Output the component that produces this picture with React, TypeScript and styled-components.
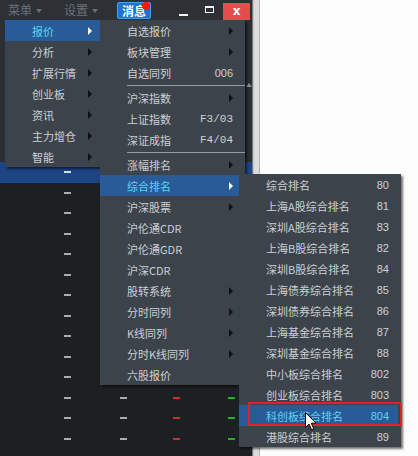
import React from 'react';
import styled, { createGlobalStyle } from 'styled-components';

const Global = createGlobalStyle`
  html, body { margin: 0; padding: 0; background: #fcfcfc; }
  body { font-family: "Noto Sans CJK SC", "Noto Sans", sans-serif; }
`;

const Screen = styled.div`
  position: relative;
  width: 418px;
  height: 456px;
  overflow: hidden;
  display: flex;
  background: #fcfcfc;
`;

const AppWindow = styled.div`
  width: 252px;
  height: 100%;
  display: flex;
  flex-direction: column;
  background: #1d2023;
`;

const Divider = styled.div`
  width: 9px;
  height: 100%;
  background: linear-gradient(
    to right,
    #7a7d80 0 1px,
    #c4c4c4 1px 2px,
    #dcdcdc 2px 7px,
    #b4b4b4 7px 8px,
    #fcfcfc 8px 9px
  );
`;

const Blank = styled.div`
  flex: 1;
  background: #fcfcfc;
`;

/* ---------- title bar ---------- */
const TitleBar = styled.div`
  height: 20px;
  flex: none;
  display: flex;
  align-items: center;
  background: #2d3136;
  padding-left: 8px;
  font-size: 12px;
  color: #6c727a;
`;

const TitleMenu = styled.div<{ $w: number }>`
  width: ${p => p.$w}px;
  display: flex;
  align-items: center;
  gap: 4px;
  line-height: 14px;
`;

const DownCaret = styled.span`
  width: 0;
  height: 0;
  border-left: 3px solid transparent;
  border-right: 3px solid transparent;
  border-top: 4px solid #6c727a;
  margin-top: 1px;
`;

const MsgButton = styled.div`
  position: relative;
  width: 34px;
  height: 17px;
  box-sizing: border-box;
  margin-top: 1px;
  background: #1976d0;
  border: 1px solid #46a0f0;
  border-radius: 2px;
  color: #ffffff;
  font-weight: 700;
  font-size: 12px;
  line-height: 15px;
  text-align: center;
  letter-spacing: 0px;
`;

const RedDot = styled.span`
  position: absolute;
  right: 0px;
  top: -1px;
  width: 8px;
  height: 8px;
  border-radius: 50%;
  background: #ff1414;
`;

const MinBtn = styled.div`
  margin-left: 28px;
  margin-top: 9px;
  width: 9px;
  height: 2px;
  background: #f2f2f2;
`;

const MaxBtn = styled.div`
  margin-left: 17px;
  width: 9px;
  height: 7px;
  box-sizing: border-box;
  border: 1px solid #f2f2f2;
  border-top-width: 2px;
  margin-top: -1px;
`;

const CloseBtn = styled.div`
  margin-left: 9px;
  width: 27px;
  height: 17px;
  margin-top: 2px;
  background: #e64b4e;
  color: #fff;
  font-family: "DejaVu Sans", sans-serif;
  font-weight: 700;
  font-size: 12px;
  line-height: 16px;
  text-align: center;
`;

/* ---------- data area ---------- */
const UpperPanel = styled.div`
  height: 142px;
  flex: none;
  display: flex;
  justify-content: flex-end;
  background: #2b2f34;
`;

const ScrollTrack = styled.div`
  width: 7px;
  background: #2a2e33;
  display: flex;
  justify-content: center;
  padding-top: 63px;
`;

const UpArrow = styled.span`
  width: 0;
  height: 0;
  border-left: 3px solid transparent;
  border-right: 3px solid transparent;
  border-bottom: 4px solid #8a9096;
`;

const DataRow = styled.div<{ $sel?: boolean }>`
  height: 20.5px;
  flex: none;
  display: grid;
  grid-template-columns: 72px 56px 53px 55px 1fr;
  align-items: center;
  background: ${p => (p.$sel ? '#1d4585' : '#1d2023')};
`;

const Cell = styled.div`
  display: flex;
  justify-content: flex-end;
  padding-right: 1px;
`;

const Dash = styled.span<{ $c: string }>`
  width: 7px;
  height: 2px;
  background: ${p => p.$c};
`;

/* ---------- menus ---------- */
const MenuBase = styled.div`
  position: absolute;
  background: #3c434b;
  box-shadow: 2px 2px 2px rgba(0, 0, 0, 0.55);
  display: flex;
  flex-direction: column;
  font-size: 11px;
  color: #ccd0d4;
`;

const MainMenu = styled(MenuBase)`
  left: 5px;
  top: 20px;
  width: 100px;
`;

const SubMenu = styled(MenuBase)`
  left: 100px;
  top: 20px;
  width: 145px;
`;

const RankMenu = styled(MenuBase)`
  left: 239px;
  top: 174px;
  width: 162px;
`;

const Item = styled.div<{ $active?: boolean; $mr: number; $pr: number }>`
  position: relative;
  height: 21px;
  flex: none;
  margin-right: ${p => p.$mr}px;
  padding: 0 ${p => p.$pr}px 0 27px;
  display: flex;
  align-items: center;
  justify-content: space-between;
  background: ${p => (p.$active ? '#285b98' : 'transparent')};
  color: ${p => (p.$active ? '#5dd4f5' : '#ccd0d4')};
  white-space: nowrap;
`;

const Arrow = styled.span<{ $active?: boolean }>`
  width: 0;
  height: 0;
  border-top: 4px solid transparent;
  border-bottom: 4px solid transparent;
  border-left: 4px solid ${p => (p.$active ? '#ffffff' : '#0e1012')};
`;

const Key = styled.span<{ $serif?: boolean }>`
  font-family: ${p =>
    p.$serif ? '"Liberation Mono", monospace' : '"Liberation Sans", sans-serif'};
  font-size: 11px;
`;

const Separator = styled.div`
  height: 4px;
  flex: none;
  display: flex;
  align-items: center;
  padding-left: 27px;
  &::after {
    content: '';
    flex: 1;
    height: 1px;
    background: #959ba1;
  }
`;

const Highlight = styled.span`
  position: absolute;
  left: 9px;
  right: -4px;
  top: -3px;
  bottom: 0;
  border: 2px solid #e2202c;
  pointer-events: none;
`;

const Cursor = styled.svg`
  position: absolute;
  left: 305px;
  top: 412px;
  width: 12px;
  height: 19px;
`;

const mainItems = ['报价', '分析', '扩展行情', '创业板', '资讯', '主力增仓', '智能'];

type Sub = { t: string; k?: string; arrow?: boolean; serif?: boolean; active?: boolean } | 'sep';
const subItems: Sub[] = [
  { t: '自选报价', arrow: true },
  { t: '板块管理', arrow: true },
  { t: '自选同列', k: '006' },
  'sep',
  { t: '沪深指数', arrow: true },
  { t: '上证指数', k: 'F3/03', serif: true },
  { t: '深证成指', k: 'F4/04', serif: true },
  'sep',
  { t: '涨幅排名', arrow: true },
  { t: '综合排名', arrow: true, active: true },
  { t: '沪深股票', arrow: true },
  { t: '沪伦通CDR' },
  { t: '沪伦通GDR' },
  { t: '沪深CDR' },
  { t: '股转系统', arrow: true },
  { t: '分时同列', arrow: true },
  { t: 'K线同列', arrow: true },
  { t: '分时K线同列', arrow: true },
  { t: '六股报价' },
];

const rankItems: [string, string][] = [
  ['综合排名', '80'],
  ['上海A股综合排名', '81'],
  ['深圳A股综合排名', '83'],
  ['上海B股综合排名', '82'],
  ['深圳B股综合排名', '84'],
  ['上海债券综合排名', '85'],
  ['深圳债券综合排名', '86'],
  ['上海基金综合排名', '87'],
  ['深圳基金综合排名', '88'],
  ['中小板综合排名', '802'],
  ['创业板综合排名', '803'],
  ['科创板综合排名', '804'],
  ['港股综合排名', '89'],
];

export default function App() {
  const rows = Array.from({ length: 15 }, (_, i) => i);
  return (
    <>
      <Global />
      <Screen>
        <AppWindow>
          <TitleBar>
            <TitleMenu $w={56}>
              菜单 <DownCaret />
            </TitleMenu>
            <TitleMenu $w={53}>
              设置 <DownCaret />
            </TitleMenu>
            <MsgButton>
              消息
              <RedDot />
            </MsgButton>
            <MinBtn />
            <MaxBtn />
            <CloseBtn>x</CloseBtn>
          </TitleBar>
          <UpperPanel>
            <ScrollTrack>
              <UpArrow />
            </ScrollTrack>
          </UpperPanel>
          {rows.map(i => (
            <DataRow key={i} $sel={i === 0}>
              <Cell>
                <Dash $c={i === 0 ? '#d8dce0' : '#a9acaf'} />
              </Cell>
              <Cell>
                <Dash $c="#a9acaf" />
              </Cell>
              <Cell>
                <Dash $c="#c9302c" />
              </Cell>
              <Cell>
                <Dash $c="#20b424" />
              </Cell>
              <span />
            </DataRow>
          ))}
        </AppWindow>
        <Divider />
        <Blank />

        <MainMenu>
          {mainItems.map((t, i) => (
            <Item key={t} $active={i === 0} $mr={5} $pr={8}>
              <span>{t}</span>
              <Arrow $active={i === 0} />
            </Item>
          ))}
        </MainMenu>

        <SubMenu>
          {subItems.map((s, i) =>
            s === 'sep' ? (
              <Separator key={i} />
            ) : (
              <Item key={i} $active={s.active} $mr={6} $pr={6}>
                <span>{s.t}</span>
                {s.arrow ? <Arrow $active={s.active} /> : s.k ? <Key $serif={s.serif}>{s.k}</Key> : null}
              </Item>
            )
          )}
        </SubMenu>

        <RankMenu>
          {rankItems.map(([t, k]) => (
            <Item key={k} $active={k === '804'} $mr={3} $pr={9}>
              <span>{t}</span>
              <Key>{k}</Key>
              {k === '804' && <Highlight />}
            </Item>
          ))}
        </RankMenu>

        <Cursor viewBox="0 0 12 19">
          <path
            d="M0.5 0.5 L0.5 15.5 L4 12 L6.6 17.8 L8.8 16.8 L6.3 11.2 L11 11.2 Z"
            fill="#ffffff"
            stroke="#000000"
            strokeWidth="1"
            strokeLinejoin="round"
          />
        </Cursor>
      </Screen>
    </>
  );
}
